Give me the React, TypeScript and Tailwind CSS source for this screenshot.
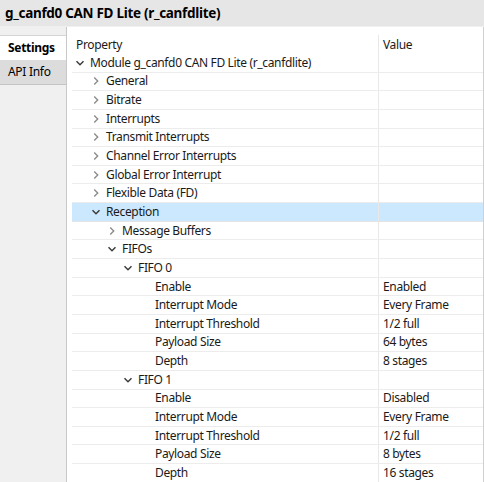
import React from 'react';

type Row = { label: string; value?: string; level: number; open?: boolean; leaf?: boolean; selected?: boolean };

const rows: Row[] = [
  { label: 'Module g_canfd0 CAN FD Lite (r_canfdlite)', level: 0, open: true },
  { label: 'General', level: 1 },
  { label: 'Bitrate', level: 1 },
  { label: 'Interrupts', level: 1 },
  { label: 'Transmit Interrupts', level: 1 },
  { label: 'Channel Error Interrupts', level: 1 },
  { label: 'Global Error Interrupt', level: 1 },
  { label: 'Flexible Data (FD)', level: 1 },
  { label: 'Reception', level: 1, open: true, selected: true },
  { label: 'Message Buffers', level: 2 },
  { label: 'FIFOs', level: 2, open: true },
  { label: 'FIFO 0', level: 3, open: true },
  { label: 'Enable', value: 'Enabled', level: 4, leaf: true },
  { label: 'Interrupt Mode', value: 'Every Frame', level: 4, leaf: true },
  { label: 'Interrupt Threshold', value: '1/2 full', level: 4, leaf: true },
  { label: 'Payload Size', value: '64 bytes', level: 4, leaf: true },
  { label: 'Depth', value: '8 stages', level: 4, leaf: true },
  { label: 'FIFO 1', level: 3, open: true },
  { label: 'Enable', value: 'Disabled', level: 4, leaf: true },
  { label: 'Interrupt Mode', value: 'Every Frame', level: 4, leaf: true },
  { label: 'Interrupt Threshold', value: '1/2 full', level: 4, leaf: true },
  { label: 'Payload Size', value: '8 bytes', level: 4, leaf: true },
  { label: 'Depth', value: '16 stages', level: 4, leaf: true },
];

function Chevron({ open }: { open?: boolean }) {
  return open ? (
    <svg width="10" height="10" viewBox="0 0 10 10" className="shrink-0">
      <path d="M1.5 3.2 L5 6.7 L8.5 3.2" fill="none" stroke="#3c3c3c" strokeWidth="1.5" />
    </svg>
  ) : (
    <svg width="10" height="10" viewBox="0 0 10 10" className="shrink-0">
      <path d="M3.2 1.5 L6.7 5 L3.2 8.5" fill="none" stroke="#8c8c8c" strokeWidth="1.4" />
    </svg>
  );
}

const indent = ['pl-[3px]', 'pl-[19px]', 'pl-[35px]', 'pl-[51px]', 'pl-[83px]'];

export default function App() {
  return (
    <div className="w-[484px] h-[482px] overflow-hidden bg-white text-[#1a1a1a] font-['Noto_Sans','Open_Sans',sans-serif] flex flex-col">
      <div className="h-[27px] shrink-0 bg-[#e6e6e6] border-b border-[#f0f0f0] flex items-center px-[5px]">
        <span className="text-[13.5px] font-bold text-black tracking-[-0.3px]">g_canfd0 CAN FD Lite (r_canfdlite)</span>
      </div>
      <div className="flex flex-1 min-h-0">
        <div className="w-[67px] shrink-0 bg-[#f0f0f0] border-r border-[#c8c8c8] pt-[8px] tracking-[-0.3px]">
          <div className="h-[25px] bg-white border-t border-[#d4d4d4] flex items-center pl-[8px] text-[12px] font-bold text-black">Settings</div>
          <div className="h-[25px] bg-[#dcdcdc] border-b border-[#c4c4c4] flex items-center pl-[8px] text-[12px] text-black">API Info</div>
        </div>
        <div className="flex-1 min-w-0 pl-[5px] pt-[8px] border-r border-[#d0d0d0] tracking-[-0.35px]">
          <div className="flex h-[19px] text-[12px]">
            <div className="w-[306px] shrink-0 pl-[4px] flex items-center">Property</div>
            <div className="flex-1 border-l border-[#e8e8e8] pl-[4px] flex items-center">Value</div>
          </div>
          {rows.map((r, i) => (
            <div
              key={i}
              className={`flex h-[18.65px] text-[12px] border-b ${r.selected ? 'bg-[#cce8ff] border-[#e4e4e4]' : 'border-[#ececec]'}`}
            >
              <div className={`w-[306px] shrink-0 flex items-center gap-[5px] whitespace-nowrap ${indent[r.level]}`}>
                {!r.leaf && <Chevron open={r.open} />}
                <span>{r.label}</span>
              </div>
              <div className="flex-1 border-l border-[#e8e8e8] pl-[4px] flex items-center whitespace-nowrap">{r.value}</div>
            </div>
          ))}
        </div>
      </div>
    </div>
  );
}
